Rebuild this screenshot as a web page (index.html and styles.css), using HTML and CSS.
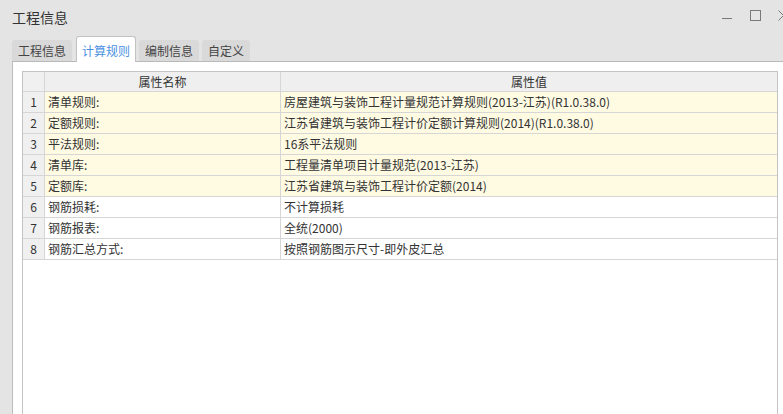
FILE: index.html
```html
<!DOCTYPE html>
<html lang="zh-CN">
<head>
<meta charset="utf-8">
<link rel="stylesheet" href="styles.css">
</head>
<body>
<div class="window">
  <div class="titlebar">
    <span class="title">工程信息</span>
    <div class="controls">
      <svg class="ctl min" width="10" height="10" viewBox="0 0 10 10"><line x1="0" y1="8.5" x2="10" y2="8.5" stroke="#7a7a7a" stroke-width="1"/></svg>
      <svg class="ctl max" width="11" height="11" viewBox="0 0 11 11"><rect x="0.5" y="0.5" width="10" height="10" fill="none" stroke="#7a7a7a" stroke-width="1"/></svg>
      <svg class="ctl close" width="11" height="11" viewBox="0 0 11 11"><path d="M0.5 0.5 L10.5 10.5 M10.5 0.5 L0.5 10.5" stroke="#7a7a7a" stroke-width="1"/></svg>
    </div>
  </div>
  <div class="tabs">
    <div class="tab">工程信息</div>
    <div class="tab active">计算规则</div>
    <div class="tab">编制信息</div>
    <div class="tab">自定义</div>
  </div>
  <div class="panel">
    <div class="grid">
      <div class="row head">
        <div class="cell num"></div>
        <div class="cell center">属性名称</div>
        <div class="cell center last">属性值</div>
      </div>
      <div class="row yellow">
        <div class="cell num">1</div>
        <div class="cell">清单规则:</div>
        <div class="cell last">房屋建筑与装饰工程计量规范计算规则(2013-江苏)(R1.0.38.0)</div>
      </div>
      <div class="row yellow">
        <div class="cell num">2</div>
        <div class="cell">定额规则:</div>
        <div class="cell last">江苏省建筑与装饰工程计价定额计算规则(2014)(R1.0.38.0)</div>
      </div>
      <div class="row yellow">
        <div class="cell num">3</div>
        <div class="cell">平法规则:</div>
        <div class="cell last">16系平法规则</div>
      </div>
      <div class="row yellow">
        <div class="cell num">4</div>
        <div class="cell">清单库:</div>
        <div class="cell last">工程量清单项目计量规范(2013-江苏)</div>
      </div>
      <div class="row yellow">
        <div class="cell num">5</div>
        <div class="cell">定额库:</div>
        <div class="cell last">江苏省建筑与装饰工程计价定额(2014)</div>
      </div>
      <div class="row">
        <div class="cell num">6</div>
        <div class="cell">钢筋损耗:</div>
        <div class="cell last">不计算损耗</div>
      </div>
      <div class="row">
        <div class="cell num">7</div>
        <div class="cell">钢筋报表:</div>
        <div class="cell last">全统(2000)</div>
      </div>
      <div class="row">
        <div class="cell num">8</div>
        <div class="cell">钢筋汇总方式:</div>
        <div class="cell last">按照钢筋图示尺寸-即外皮汇总</div>
      </div>
    </div>
  </div>
</div>
</body>
</html>
```

FILE: styles.css
```css
html, body {
  margin: 0;
  padding: 0;
  height: 100%;
  overflow: hidden;
}
body {
  background: #e4e4e4;
  font-family: "Noto Sans CJK SC", "Microsoft YaHei", sans-serif;
  color: #333;
}
.window {
  display: flex;
  flex-direction: column;
  height: 100vh;
}
.titlebar {
  height: 36px;
  display: flex;
  align-items: center;
  padding-left: 12px;
  box-sizing: border-box;
}
.title {
  font-size: 14px;
  color: #333;
  flex: 1;
  line-height: 1;
  margin-top: -2px;
}
.controls {
  display: flex;
  align-items: center;
  margin-top: -6px;
  flex-shrink: 0;
  margin-right: -6px;
}
.ctl { display: block; flex-shrink: 0; }
.min { margin-right: 18px; }
.max { margin-right: 17px; }
.tabs {
  display: flex;
  align-items: flex-end;
  gap: 3px;
  padding-left: 12px;
  height: 26px;
  margin-bottom: -1px;
}
.tab {
  height: 21px;
  line-height: 21px;
  padding: 0 6px;
  font-size: 12px;
  color: #444;
  background: #d9d9d9;
  border-radius: 3px 3px 0 0;
  margin-bottom: 1px;
}
.tab.active {
  height: 25px;
  line-height: 27px;
  padding: 0 5px;
  background: #fff;
  color: #4a90e2;
  border: 1px solid #c2c2c2;
  border-bottom: none;
  margin-bottom: 0;
  margin-left: 1px;
  position: relative;
  z-index: 1;
}
.panel {
  flex: 1;
  background: #fff;
  margin-left: 12px;
  border-top: 1px solid #b9b9b9;
  border-left: 1px solid #bdbdbd;
  padding: 9px 5px 0 9px;
}
.grid {
  width: 756px;
  height: 100%;
  box-sizing: border-box;
  border: 1px solid #c4c4c4;
  border-bottom: none;
}
.row {
  display: grid;
  grid-template-columns: 22px 236px 1fr;
  height: 21px;
  font-size: 12px;
}
.row.head {
  height: 20px;
  background: #efefef;
}
.row.yellow { background: #fffbe3; }
.cell {
  box-sizing: border-box;
  border-right: 1px solid #d6d6d6;
  border-bottom: 1px solid #d6d6d6;
  padding-left: 3px;
  line-height: 20px;
  white-space: nowrap;
  overflow: hidden;
}
.row.head .cell { line-height: 19px; }
.cell.last { border-right: none; }
.cell.center { text-align: center; padding-left: 0; }
.cell.num {
  background: #f0f0f0;
  text-align: center;
  padding-left: 0;
}
```
